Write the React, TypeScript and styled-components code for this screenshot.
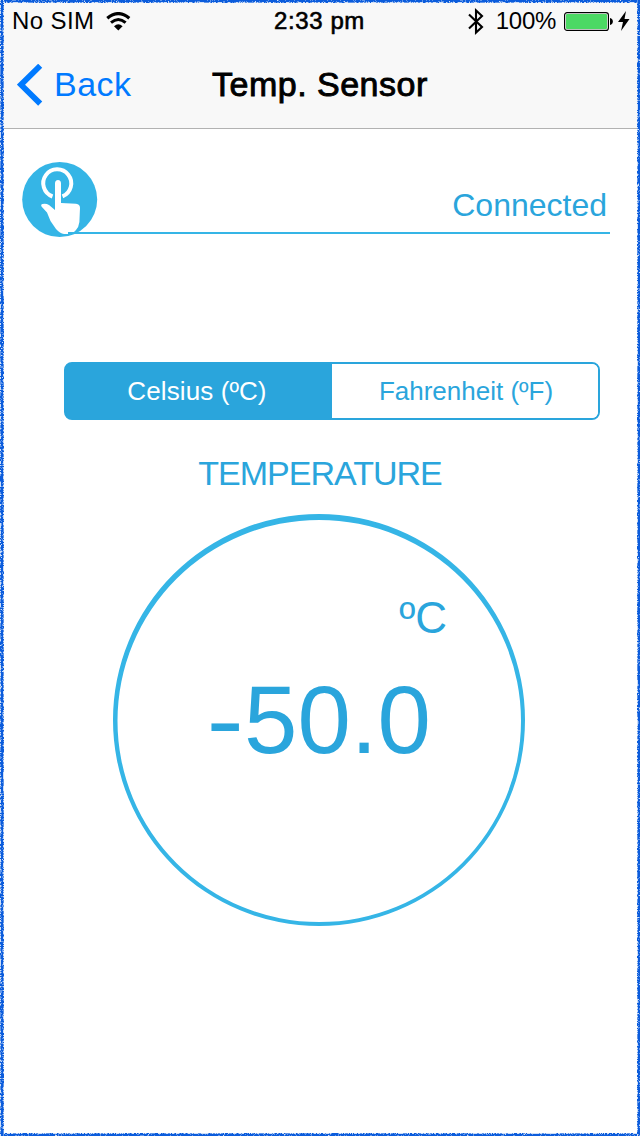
import React from "react";
import styled, { createGlobalStyle } from "styled-components";

const BLUE = "#2aa5dc";
const SKY = "#35b5e6";

const GlobalStyle = createGlobalStyle`
  * { box-sizing: border-box; }
  body { margin: 0; background: #fff; }
`;

const Screen = styled.div`
  position: relative;
  width: 640px;
  height: 1136px;
  display: flex;
  flex-direction: column;
  background: #fff;
  overflow: hidden;
  font-family: "Liberation Sans", Arial, sans-serif;
`;

const SketchFrame = styled.svg`
  position: absolute;
  inset: 0;
  pointer-events: none;
`;

const Text = styled.span<{ $size: number; $color?: string; $spacing?: number; $medium?: number }>`
  font-size: ${(p) => p.$size}px;
  line-height: 40px;
  color: ${(p) => p.$color || "#000"};
  letter-spacing: ${(p) => p.$spacing || 0}px;
  -webkit-text-stroke: ${(p) => p.$medium || 0}px ${(p) => p.$color || "#000"};
  white-space: nowrap;
`;

const Header = styled.header`
  height: 129px;
  background: #f8f8f8;
  border-bottom: 1px solid #b2b2b2;
`;

const StatusBar = styled.div`
  height: 41px;
  padding: 1px 10px 0 12px;
  display: grid;
  grid-template-columns: 262px 1fr auto;
  align-items: start;
`;

const StatusGroup = styled.div`
  display: flex;
  height: 40px;
  align-items: center;
`;

const WifiIcon = styled.svg`
  margin-left: 12px;
`;

const BatteryIcon = styled.svg`
  margin-left: 8px;
`;

const BoltIcon = styled.svg`
  margin-left: 5px;
`;

const Percent = styled(Text)`
  margin-left: 12px;
`;

const NavBar = styled.nav`
  height: 87px;
  padding: 23px 0 0 17px;
  display: grid;
  grid-template-columns: 195px auto 1fr;
`;

const BackButton = styled.div`
  display: flex;
  align-items: flex-start;
  gap: 9px;
`;

const DeviceRow = styled.section`
  height: 109px;
  margin: 0 30px 0 22px;
  padding-top: 33px;
  display: grid;
  grid-template-columns: 76px 1fr;
`;

const Touch = styled.svg`
  width: 76px;
  height: 76px;
  display: block;
`;

const DeviceStatus = styled.div`
  height: 72px;
  margin-left: -30px;
  padding: 23px 3px 0 0;
  border-bottom: 2px solid ${SKY};
  text-align: right;
`;

const Segments = styled.div`
  display: grid;
  grid-template-columns: 266px 1fr;
  width: 536px;
  height: 58px;
  margin: 124px 0 0 64px;
  border: 2px solid ${BLUE};
  border-radius: 8px;
  background: linear-gradient(90deg, ${BLUE} 50%, #fff 50%) border-box;
`;

const Segment = styled.div<{ $active?: boolean }>`
  background: ${(p) => (p.$active ? BLUE : "#fff")};
  border-radius: ${(p) => (p.$active ? "6px 0 0 6px" : "0 6px 6px 0")};
  text-align: center;
  padding: ${(p) => (p.$active ? "7px 4px 0 0" : "7px 0 0 2px")};
`;

const Caption = styled.h2`
  margin: 33px 0 0;
  height: 61px;
  font-weight: 400;
  text-align: center;
`;

const Gauge = styled.div`
  width: 412px;
  height: 412px;
  margin-left: 113px;
  display: grid;
  > * { grid-area: 1 / 1; }
`;

const Reading = styled.div`
  display: flex;
  flex-direction: column;
  padding-top: 84px;
`;

const Unit = styled.div`
  padding-right: 78px;
  height: 102px;
  text-align: right;
`;

const Value = styled.div`
  padding-left: 5px;
  text-align: center;
`;

const Sign = styled.span`
  display: inline-block;
  transform: scaleX(1.17);
  transform-origin: right center;
`;

/* Light specks that give the pencil-drawn frame its rough edge. */
function specks(): { strong: string; faint: string } {
  let seed = 7;
  const rand = () => {
    seed = (seed * 16807) % 2147483647;
    return seed / 2147483647;
  };
  let strong = "";
  let faint = "";
  const dot = (x: number, y: number, edge: boolean) => {
    const r = rand();
    if (r < (edge ? 0.4 : 0.01)) strong += `M${x} ${y}h1v1h-1z`;
    else if (r < (edge ? 0.8 : 0.16)) faint += `M${x} ${y}h1v1h-1z`;
  };
  for (let y = 0; y < 1136; y++) {
    for (const x of [0, 1, 2, 3]) dot(x, y, x === 0 || x === 3);
    for (const x of [637, 638, 639]) dot(x, y, x === 637);
  }
  for (let x = 4; x < 637; x++) {
    for (const y of [0, 1, 2]) dot(x, y, y === 2);
    for (const y of [1133, 1134, 1135]) dot(x, y, y === 1133);
  }
  return { strong, faint };
}

const grain = specks();

function Frame() {
  return (
    <SketchFrame width="640" height="1136" shapeRendering="crispEdges">
      <path d="M0 0H640V1136H0ZM4 3V1133H637V3Z" fill="#0b5cdc" fillRule="evenodd" />
      <path d={grain.strong} fill="#fff" fillOpacity=".8" />
      <path d={grain.faint} fill="#fff" fillOpacity=".35" />
    </SketchFrame>
  );
}

export default function App() {
  return (
    <>
      <GlobalStyle />
      <Screen>
        <Header>
          <StatusBar>
            <StatusGroup>
              <Text $size={24} $spacing={0.4}>No SIM</Text>
              <WifiIcon width="25" height="19" viewBox="0 0 25 19" fill="none" stroke="#000">
                <path d="M1.3 6.2Q12.3 -3 23.3 6.2" strokeWidth="3.2" />
                <path d="M5 10.7Q12.3 4.4 19.6 10.7" strokeWidth="3" />
                <path d="M8 14.2Q12.3 10.4 16.6 14.2L12.3 18.5Z" fill="#000" stroke="none" />
              </WifiIcon>
            </StatusGroup>
            <Text $size={24} $spacing={0.6} $medium={0.6}>2:33 pm</Text>
            <StatusGroup>
              <svg width="16" height="27" viewBox="0 0 16 27" fill="none" stroke="#000" strokeWidth="2.1">
                <path d="M1 6.5L14 19L8 24.5V2.5L14 8L1 20.5" />
              </svg>
              <Percent $size={24} $spacing={-0.3}>100%</Percent>
              <BatteryIcon width="49" height="19" viewBox="0 0 49 19">
                <rect x=".6" y=".6" width="43.8" height="17.8" rx="2.5" fill="#fff" stroke="#000" strokeWidth="1.2" />
                <rect x="2" y="2" width="41" height="15" rx="1" fill="#4cd964" />
                <path d="M46 6C49.8 6.5 49.8 12.5 46 13Z" />
              </BatteryIcon>
              <BoltIcon width="12" height="20" viewBox="0 0 12 20">
                <path d="M8 0L0 11H5L3 20L11.5 8H6.5Z" />
              </BoltIcon>
            </StatusGroup>
          </StatusBar>
          <NavBar>
            <BackButton>
              <svg width="28" height="42" viewBox="0 0 28 42" fill="none" stroke="#007aff" strokeWidth="5.8">
                <path d="M23.2 1.8L4 20.7L23.2 39.6" />
              </svg>
              <Text $size={34} $color="#007aff" $spacing={0.5}>Back</Text>
            </BackButton>
            <Text $size={34} $spacing={0.5} $medium={0.9}>Temp. Sensor</Text>
          </NavBar>
        </Header>
        <DeviceRow>
          <Touch viewBox="0 0 76 76">
            <circle cx="37.7" cy="37.5" r="37.5" fill={SKY} />
            <path d="M30.5 34.5A14 14 0 1 1 40.5 34.3" fill="none" stroke="#fff" strokeWidth="4" />
            <path d="M33 21.5Q33 18 36 18Q39 18 39 21.5V41L54 41.8Q58 42.3 58 46L57.4 60Q56.8 65 54 68L52 70H46V72H42Q38 71.5 34 67L28.5 59L25 50.5L19.5 44.5Q18.5 42.5 20.5 42Q24 41.2 27 43L33 48Z" fill="#fff" />
          </Touch>
          <DeviceStatus>
            <Text $size={32} $color={BLUE}>Connected</Text>
          </DeviceStatus>
        </DeviceRow>
        <Segments>
          <Segment $active>
            <Text $size={26} $color="#fff" $spacing={0.1}>Celsius (ºC)</Text>
          </Segment>
          <Segment>
            <Text $size={26} $color={BLUE}>Fahrenheit (ºF)</Text>
          </Segment>
        </Segments>
        <Caption>
          <Text $size={34} $color={BLUE} $spacing={-1}>TEMPERATURE</Text>
        </Caption>
        <Gauge>
          <svg width="412" height="412">
            <path
              fill={SKY}
              fillRule="evenodd"
              d="M0 206A206 206 0 1 1 412 206A206 206 0 1 1 0 206ZM4.5 207A201.7 201 0 1 0 408 207A201.7 201 0 1 0 4.5 207Z"
            />
          </svg>
          <Reading>
            <Unit>
              <Text $size={44} $color={BLUE}>ºC</Text>
            </Unit>
            <Value>
              <Text $size={96} $color={BLUE}>
                <Sign>-</Sign>50.0
              </Text>
            </Value>
          </Reading>
        </Gauge>
        <Frame />
      </Screen>
    </>
  );
}
